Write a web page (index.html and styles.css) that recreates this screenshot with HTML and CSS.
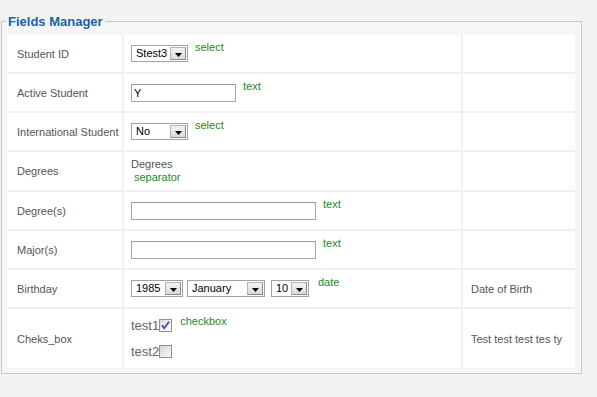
FILE: index.html
```html
<!DOCTYPE html>
<html>
<head>
<meta charset="utf-8">
<link rel="stylesheet" href="styles.css">
</head>
<body>
<fieldset class="panel">
  <legend class="panel-title">Fields Manager</legend>
  <div class="fields">
    <div class="cell key">Student ID</div>
    <div class="cell val">
      <div class="ctl">
        <span class="sel w57"><span class="sel-text">Stest3</span><span class="sel-btn"><svg width="7" height="4" viewBox="0 0 7 4"><path d="M0 0H7L3.5 4Z" fill="#000"/></svg></span></span>
        <span class="hint">select</span>
      </div>
    </div>
    <div class="cell desc"></div>

    <div class="cell key">Active Student</div>
    <div class="cell val">
      <div class="ctl">
        <span class="inp w105">Y</span>
        <span class="hint">text</span>
      </div>
    </div>
    <div class="cell desc"></div>

    <div class="cell key">International Student</div>
    <div class="cell val">
      <div class="ctl">
        <span class="sel w57"><span class="sel-text">No</span><span class="sel-btn"><svg width="7" height="4" viewBox="0 0 7 4"><path d="M0 0H7L3.5 4Z" fill="#000"/></svg></span></span>
        <span class="hint">select</span>
      </div>
    </div>
    <div class="cell desc"></div>

    <div class="cell key tall">Degrees</div>
    <div class="cell val tall">
      <div class="sep">
        <span class="sep-title">Degrees</span>
        <span class="sep-hint">separator</span>
      </div>
    </div>
    <div class="cell desc tall"></div>

    <div class="cell key">Degree(s)</div>
    <div class="cell val">
      <div class="ctl">
        <span class="inp w185"></span>
        <span class="hint">text</span>
      </div>
    </div>
    <div class="cell desc"></div>

    <div class="cell key">Major(s)</div>
    <div class="cell val">
      <div class="ctl">
        <span class="inp w185"></span>
        <span class="hint">text</span>
      </div>
    </div>
    <div class="cell desc"></div>

    <div class="cell key">Birthday</div>
    <div class="cell val">
      <div class="ctl">
        <span class="sel w52 gap4"><span class="sel-text">1985</span><span class="sel-btn"><svg width="7" height="4" viewBox="0 0 7 4"><path d="M0 0H7L3.5 4Z" fill="#000"/></svg></span></span>
        <span class="sel w78 gap6"><span class="sel-text">January</span><span class="sel-btn"><svg width="7" height="4" viewBox="0 0 7 4"><path d="M0 0H7L3.5 4Z" fill="#000"/></svg></span></span>
        <span class="sel w38"><span class="sel-text">10</span><span class="sel-btn"><svg width="7" height="4" viewBox="0 0 7 4"><path d="M0 0H7L3.5 4Z" fill="#000"/></svg></span></span>
        <span class="hint hint-date">date</span>
      </div>
    </div>
    <div class="cell desc">Date of Birth</div>

    <div class="cell key last">Cheks_box</div>
    <div class="cell val last">
      <div class="checks">
        <div class="check-line">
          <span class="check-label">test1</span>
          <svg class="cb" width="13" height="13" viewBox="0 0 13 13">
            <defs><linearGradient id="g1" x1="0" y1="0" x2="1" y2="1"><stop offset="0" stop-color="#dcdcdc"/><stop offset="1" stop-color="#ffffff"/></linearGradient></defs>
            <rect x="0.5" y="0.5" width="12" height="12" fill="url(#g1)" stroke="#8f8f8f"/>
            <path d="M3 6.2L5.2 9.2L10 2.8" fill="none" stroke="#3a4fb8" stroke-width="1.8"/>
          </svg>
          <span class="hint hint-cb">checkbox</span>
        </div>
        <div class="check-line">
          <span class="check-label">test2</span>
          <svg class="cb" width="13" height="13" viewBox="0 0 13 13">
            <defs><linearGradient id="g2" x1="0" y1="0" x2="1" y2="1"><stop offset="0" stop-color="#d6d6d6"/><stop offset="1" stop-color="#f8f8f8"/></linearGradient></defs>
            <rect x="0.5" y="0.5" width="12" height="12" fill="url(#g2)" stroke="#8f8f8f"/>
          </svg>
        </div>
      </div>
    </div>
    <div class="cell desc last">Test test test tes ty</div>
  </div>
</fieldset>
</body>
</html>
```

FILE: styles.css
```css
html, body {
  margin: 0;
  padding: 0;
  background: #f2f2f2;
  font-family: "Liberation Sans", Arial, sans-serif;
  font-size: 11px;
  color: #555;
}

.panel {
  box-sizing: border-box;
  width: 581px;
  margin: 14px 0 0 1px;
  padding: 6px 6px 5px 6px;
  border: 1px solid #c9c9c9;
  background: #f6f6f6;
}

.panel-title {
  padding: 0 2px;
  margin-left: -2px;
  font-size: 13px;
  font-weight: bold;
  line-height: 15px;
  color: #22629c;
}

.fields {
  display: grid;
  grid-template-columns: 116px 339px 112px;
  background: #fff;
}

.cell {
  box-sizing: border-box;
  min-height: 39px;
  display: flex;
  align-items: center;
  background: #fff;
  border-bottom: 2px solid #efefef;
  border-right: 2px solid #f1f1f1;
}

.cell.desc { border-right: none; }
.cell.tall { min-height: 40px; }
.cell.last { min-height: 59px; border-bottom: none; }

.key { padding-left: 9px; }
.val { padding-left: 7px; }
.desc { padding-left: 8px; }

.ctl {
  display: flex;
  align-items: center;
}

.hint {
  color: #1e8a1e;
  line-height: 13px;
  margin-left: 7px;
  margin-bottom: 13px;
}

.hint-date { margin-left: 9px; }

.sel {
  box-sizing: border-box;
  height: 17px;
  display: inline-flex;
  align-items: center;
  justify-content: space-between;
  border: 1px solid #a3a3a3;
  background: #fff;
  color: #000;
  padding: 0 1px 0 4px;
}

.w57 { width: 57px; }
.w52 { width: 52px; }
.w78 { width: 78px; }
.w38 { width: 38px; }
.gap4 { margin-right: 4px; }
.gap6 { margin-right: 6px; }

.sel-text { line-height: 13px; }

.sel-btn {
  box-sizing: border-box;
  width: 16px;
  height: 13px;
  display: flex;
  align-items: center;
  justify-content: center;
  padding-top: 2px;
  border: 1px solid #8c8c8c;
  border-top-color: #b5b5b5;
  border-left-color: #b5b5b5;
  background: linear-gradient(#f4f4f4, #d9d9d9);
}

.inp {
  box-sizing: border-box;
  height: 18px;
  display: inline-flex;
  align-items: center;
  padding-left: 2px;
  border: 1px solid #a5a5a5;
  border-top-color: #9a9a9a;
  background: #fff;
  color: #000;
}

.w105 { width: 105px; }
.w185 { width: 185px; }

.sep {
  display: flex;
  flex-direction: column;
  line-height: 13px;
}

.sep-hint {
  color: #1e8a1e;
  margin-left: 3px;
}

.checks {
  display: flex;
  flex-direction: column;
  gap: 10px;
}

.check-line {
  display: flex;
  align-items: center;
  height: 16px;
}

.check-label {
  font-size: 13px;
  color: #666;
  line-height: 16px;
}

.cb { display: block; }

.hint-cb {
  margin-left: 8px;
  margin-bottom: 9px;
}
```
